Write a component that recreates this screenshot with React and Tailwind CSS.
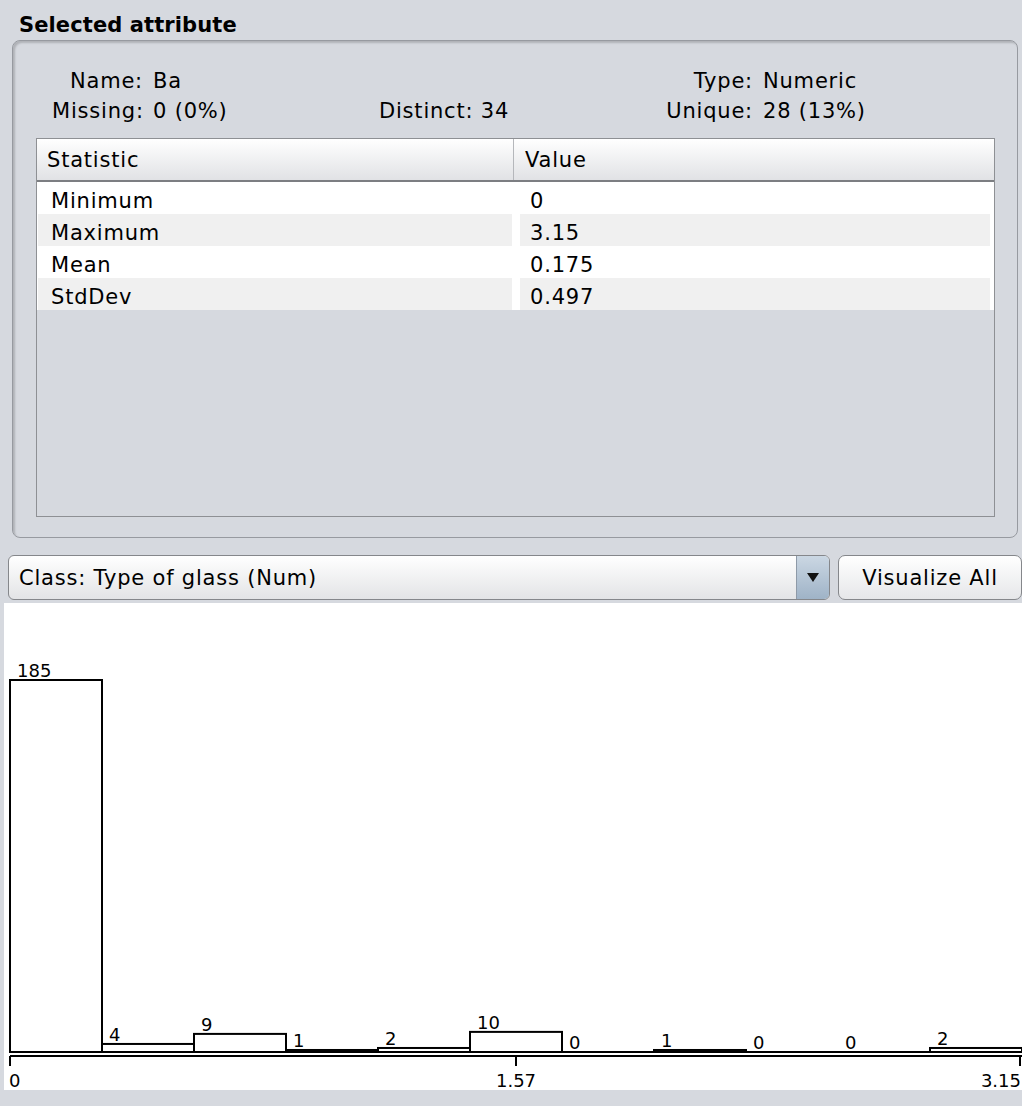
import React from 'react';

const font = { fontFamily: '"DejaVu Sans", "Liberation Sans", sans-serif' };

const stats = [
  ['Minimum', '0'],
  ['Maximum', '3.15'],
  ['Mean', '0.175'],
  ['StdDev', '0.497'],
];

// histogram bins: counts over 11 equal bins from 0 to 3.15
const counts = [185, 4, 9, 1, 2, 10, 0, 1, 0, 0, 2];
const X0 = 10;
const BIN = 92;
const BASE = 1052;
const SCALE = 372 / 185;

function Histogram() {
  return (
    <svg width="1018" height="487" viewBox="4 603 1018 487" className="block overflow-visible">
      {counts.map((c, i) => {
        const x = X0 + BIN * i;
        const h = c * SCALE;
        return (
          <g key={i}>
            {c > 0 && (
              <rect x={x} y={BASE - h} width={BIN} height={h} fill="none" stroke="#000" strokeWidth="2" />
            )}
            <text x={x + 7} y={BASE - h - 3} fontSize="18" fill="#000" style={font}>
              {c}
            </text>
          </g>
        );
      })}
      <line x1={X0} y1={BASE} x2={1022} y2={BASE} stroke="#000" strokeWidth="2" />
      <line x1={X0} y1={1056} x2={1022} y2={1056} stroke="#000" strokeWidth="2" />
      <line x1={10} y1={1056} x2={10} y2={1066} stroke="#000" strokeWidth="2" />
      <line x1={516} y1={1056} x2={516} y2={1066} stroke="#000" strokeWidth="2" />
      <line x1={1020} y1={1056} x2={1020} y2={1066} stroke="#000" strokeWidth="2" />
      <text x={9} y={1087} fontSize="18" style={font}>0</text>
      <text x={516} y={1087} fontSize="18" textAnchor="middle" style={font}>1.57</text>
      <text x={1021} y={1087} fontSize="18" textAnchor="end" style={font}>3.15</text>
    </svg>
  );
}

export default function App() {
  return (
    <div className="w-[1022px] h-[1106px] bg-[#d6d9df] text-black flex flex-col overflow-hidden" style={font}>
      {/* title */}
      <div className="h-[40px] pl-[19px] pt-[13px] text-[21px] leading-[24px] font-bold tracking-[0.1px]">Selected attribute</div>

      {/* attribute panel */}
      <div className="ml-[12px] mr-[4px] h-[498px] rounded-[8px] border border-[#979aa0] shadow-[inset_2px_2px_2px_rgba(0,0,0,0.18)] flex flex-col">
        <div className="pt-[25px] flex text-[21px] leading-[30px] tracking-[0.8px]">
          <div className="w-[366px] pl-[39px] grid grid-cols-[91px_auto] gap-x-[10px]">
            <span className="text-right">Name:</span>
            <span>Ba</span>
            <span className="text-right">Missing:</span>
            <span>0 (0%)</span>
          </div>
          <div className="w-[286px] flex flex-col">
            <span>&nbsp;</span>
            <span>Distinct: 34</span>
          </div>
          <div className="grid grid-cols-[88px_auto] gap-x-[10px]">
            <span className="text-right">Type:</span>
            <span>Numeric</span>
            <span className="text-right">Unique:</span>
            <span>28 (13%)</span>
          </div>
        </div>

        {/* statistics table */}
        <div className="mt-[12px] ml-[23px] mr-[22px] h-[379px] border border-[#8e9094] flex flex-col text-[21px] tracking-[0.8px]">
          <div className="h-[43px] flex bg-gradient-to-b from-white to-[#e1e2e5] border-b-2 border-[#7c7e82]">
            <div className="w-[477px] pl-[10px] pt-[9px] leading-[24px] border-r border-[#b5b7bb]">Statistic</div>
            <div className="pl-[11px] pt-[9px] leading-[24px]">Value</div>
          </div>
          <div className="flex flex-col bg-white">
            {stats.map(([k, v], i) => (
              <div key={k} className="h-[32px] flex px-[1px]">
                <div className={`w-[474px] pl-[13px] pt-[7px] leading-[24px] ${i % 2 ? 'bg-[#f0f0f0]' : 'bg-white'}`}>{k}</div>
                <div className="w-[8px]" />
                <div className={`w-[470px] pl-[10px] pt-[7px] leading-[24px] ${i % 2 ? 'bg-[#f0f0f0]' : 'bg-white'}`}>{v}</div>
              </div>
            ))}
          </div>
          <div className="flex-1 bg-[#d6d9df]" />
        </div>
      </div>

      {/* class selector + button */}
      <div className="mt-[17px] flex h-[45px] text-[21px] tracking-[0.8px]">
        <div className="ml-[8px] w-[822px] rounded-[6px] border border-[#85878b] bg-gradient-to-b from-white to-[#e3e4e6] flex overflow-hidden">
          <div className="flex-1 pl-[10px] flex items-center leading-[24px]">Class: Type of glass (Num)</div>
          <div className="w-[33px] border-l border-[#8e9aa8] bg-gradient-to-b from-[#cbd7e3] to-[#9fb3c7] flex items-center justify-center">
            <svg width="12" height="9" viewBox="0 0 12 9">
              <path d="M0 0 L12 0 L6 9 Z" fill="#111" />
            </svg>
          </div>
        </div>
        <div className="ml-[8px] w-[184px] rounded-[7px] border border-[#85878b] bg-gradient-to-b from-white to-[#e6e7e9] flex items-center justify-center leading-[24px]">
          Visualize All
        </div>
      </div>

      {/* histogram */}
      <div className="mt-[3px] ml-[4px] w-[1018px] h-[487px] bg-white">
        <Histogram />
      </div>
    </div>
  );
}
